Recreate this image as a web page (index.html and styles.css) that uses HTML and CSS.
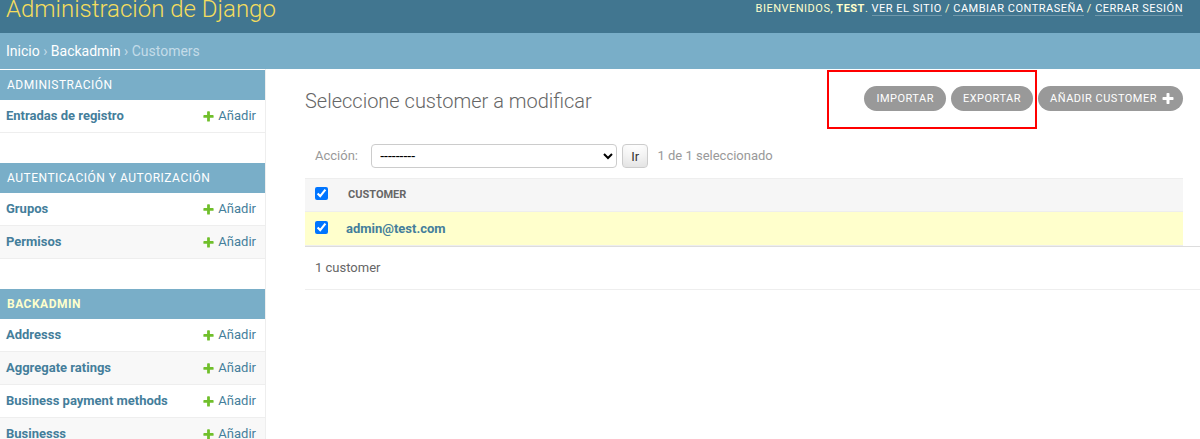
FILE: index.html
```html
<!DOCTYPE html>
<html lang="es">
<head>
<meta charset="utf-8">
<title>Seleccione customer a modificar</title>
<link rel="stylesheet" href="styles.css">
</head>
<body>
<header class="header">
  <h1 class="site-name">Administración de Django</h1>
  <div class="user-tools">Bienvenidos, <strong>test</strong>. <a href="#">Ver el sitio</a> / <a href="#">Cambiar contraseña</a> / <a href="#">Cerrar sesión</a></div>
</header>
<div class="breadcrumbs"><a href="#">Inicio</a> › <a href="#">Backadmin</a> › Customers</div>
<div class="main">
  <nav class="sidebar">
    <div class="module">
      <div class="caption">Administración</div>
      <div class="row"><a class="model" href="#">Entradas de registro</a><a class="addlink" href="#"><svg width="13" height="13" viewBox="0 0 1792 1792"><path fill="#70bf2b" d="M1600 796v192q0 40-28 68t-68 28h-416v416q0 40-28 68t-68 28h-192q-40 0-68-28t-28-68v-416h-416q-40 0-68-28t-28-68v-192q0-40 28-68t68-28h416v-416q0-40 28-68t68-28h192q40 0 68 28t28 68v416h416q40 0 68 28t28 68z"/></svg>Añadir</a></div>
    </div>
    <div class="module">
      <div class="caption">Autenticación y autorización</div>
      <div class="row"><a class="model" href="#">Grupos</a><a class="addlink" href="#"><svg width="13" height="13" viewBox="0 0 1792 1792"><path fill="#70bf2b" d="M1600 796v192q0 40-28 68t-68 28h-416v416q0 40-28 68t-68 28h-192q-40 0-68-28t-28-68v-416h-416q-40 0-68-28t-28-68v-192q0-40 28-68t68-28h416v-416q0-40 28-68t68-28h192q40 0 68 28t28 68v416h416q40 0 68 28t28 68z"/></svg>Añadir</a></div>
      <div class="row"><a class="model" href="#">Permisos</a><a class="addlink" href="#"><svg width="13" height="13" viewBox="0 0 1792 1792"><path fill="#70bf2b" d="M1600 796v192q0 40-28 68t-68 28h-416v416q0 40-28 68t-68 28h-192q-40 0-68-28t-28-68v-416h-416q-40 0-68-28t-28-68v-192q0-40 28-68t68-28h416v-416q0-40 28-68t68-28h192q40 0 68 28t28 68v416h416q40 0 68 28t28 68z"/></svg>Añadir</a></div>
    </div>
    <div class="module">
      <div class="caption caption-current">Backadmin</div>
      <div class="row"><a class="model" href="#">Addresss</a><a class="addlink" href="#"><svg width="13" height="13" viewBox="0 0 1792 1792"><path fill="#70bf2b" d="M1600 796v192q0 40-28 68t-68 28h-416v416q0 40-28 68t-68 28h-192q-40 0-68-28t-28-68v-416h-416q-40 0-68-28t-28-68v-192q0-40 28-68t68-28h416v-416q0-40 28-68t68-28h192q40 0 68 28t28 68v416h416q40 0 68 28t28 68z"/></svg>Añadir</a></div>
      <div class="row"><a class="model" href="#">Aggregate ratings</a><a class="addlink" href="#"><svg width="13" height="13" viewBox="0 0 1792 1792"><path fill="#70bf2b" d="M1600 796v192q0 40-28 68t-68 28h-416v416q0 40-28 68t-68 28h-192q-40 0-68-28t-28-68v-416h-416q-40 0-68-28t-28-68v-192q0-40 28-68t68-28h416v-416q0-40 28-68t68-28h192q40 0 68 28t28 68v416h416q40 0 68 28t28 68z"/></svg>Añadir</a></div>
      <div class="row"><a class="model" href="#">Business payment methods</a><a class="addlink" href="#"><svg width="13" height="13" viewBox="0 0 1792 1792"><path fill="#70bf2b" d="M1600 796v192q0 40-28 68t-68 28h-416v416q0 40-28 68t-68 28h-192q-40 0-68-28t-28-68v-416h-416q-40 0-68-28t-28-68v-192q0-40 28-68t68-28h416v-416q0-40 28-68t68-28h192q40 0 68 28t28 68v416h416q40 0 68 28t28 68z"/></svg>Añadir</a></div>
      <div class="row"><a class="model" href="#">Businesss</a><a class="addlink" href="#"><svg width="13" height="13" viewBox="0 0 1792 1792"><path fill="#70bf2b" d="M1600 796v192q0 40-28 68t-68 28h-416v416q0 40-28 68t-68 28h-192q-40 0-68-28t-28-68v-416h-416q-40 0-68-28t-28-68v-192q0-40 28-68t68-28h416v-416q0-40 28-68t68-28h192q40 0 68 28t28 68v416h416q40 0 68 28t28 68z"/></svg>Añadir</a></div>
    </div>
  </nav>
  <div class="content">
    <div class="content-head">
      <h1 class="title">Seleccione customer a modificar</h1>
      <ul class="object-tools">
        <li><a class="tool" href="#">Importar</a></li>
        <li><a class="tool" href="#">Exportar</a></li>
        <li><a class="tool tool-add" href="#">Añadir customer<svg width="14" height="14" viewBox="0 0 1792 1792"><path fill="#fff" d="M1600 736v192q0 40-28 68t-68 28h-416v416q0 40-28 68t-68 28h-192q-40 0-68-28t-28-68v-416h-416q-40 0-68-28t-28-68v-192q0-40 28-68t68-28h416v-416q0-40 28-68t68-28h192q40 0 68 28t28 68v416h416q40 0 68 28t28 68z"/></svg></a></li>
      </ul>
    </div>
    <div class="actions">
      <label>Acción: <select class="action-select"><option>---------</option><option>Eliminar customers seleccionado/s</option></select></label><button class="go" type="button">Ir</button> <span class="counter">1 de 1 seleccionado</span>
    </div>
    <table class="results">
      <thead>
        <tr><th class="check-col"><input type="checkbox" checked></th><th class="col-head">Customer</th></tr>
      </thead>
      <tbody>
        <tr class="selected"><td class="check-col"><input type="checkbox" checked></td><th class="cell-link"><a href="#">admin@test.com</a></th></tr>
      </tbody>
    </table>
    <p class="paginator">1 customer</p>
  </div>
</div>
<div class="annotation"></div>
</body>
</html>
```
FILE: styles.css
```css
* { box-sizing: border-box; }
html, body { margin: 0; padding: 0; }
body {
  font-family: Roboto, "Lucida Grande", "DejaVu Sans", sans-serif;
  font-size: 14px;
  color: #333;
  background: #fff;
  width: 1200px;
  height: 439px;
  overflow: hidden;
  position: relative;
}
a { color: #447e9b; text-decoration: none; }

.header {
  background: #417690;
  height: 33px;
  display: flex;
  justify-content: space-between;
  align-items: flex-start;
  padding: 0 17px 0 6px;
  overflow: hidden;
}
.site-name {
  margin: -3px 0 0;
  font-size: 24px;
  line-height: 24px;
  font-weight: 300;
  color: #f5dd5d;
}
.user-tools {
  margin-top: 3px;
  font-size: 11px;
  line-height: 12px;
  letter-spacing: 0.5px;
  text-transform: uppercase;
  color: #ffc;
}
.user-tools strong { font-weight: 700; }
.user-tools a { color: #fff; border-bottom: 1px solid rgba(255,255,255,0.25); }

.breadcrumbs {
  background: #79aec8;
  height: 36px;
  line-height: 36px;
  padding: 0 6px;
  font-size: 14px;
  color: #c4dce8;
}
.breadcrumbs a { color: #fff; }

.main { display: flex; min-height: 370px; }

.sidebar {
  flex: 0 0 266px;
  border-right: 1px solid #eee;
  padding-top: 1px;
}
.module { margin-bottom: 30px; }
.module:last-child { margin-bottom: 0; }
.caption {
  background: #79aec8;
  color: #fff;
  font-size: 12px;
  line-height: 14px;
  padding: 8px 7px;
  letter-spacing: 0.5px;
  text-transform: uppercase;
}
.caption-current { font-weight: 700; color: #ffc; }
.row {
  display: flex;
  justify-content: space-between;
  align-items: center;
  padding: 8px 9px 8px 6px;
  line-height: 16px;
  font-size: 13px;
  border-bottom: 1px solid #eee;
}
.row:nth-child(odd) { background: #f8f8f8; }
.model { font-weight: 700; }
.addlink { display: flex; align-items: center; }
.addlink svg { margin-right: 3px; }

.content {
  flex: 1;
  min-width: 0;
  padding: 17px 17px 0 39px;
}
.content-head {
  display: flex;
  justify-content: space-between;
  align-items: flex-start;
  height: 27px;
}
.title {
  margin: 3px 0 0;
  font-size: 20px;
  line-height: 24px;
  font-weight: 300;
  color: #666;
}
.object-tools {
  list-style: none;
  margin: 0;
  padding: 0;
  display: flex;
  gap: 5px;
}
.tool {
  display: block;
  background: #999;
  color: #fff;
  font-size: 11px;
  line-height: 19px;
  padding: 3px 12px;
  letter-spacing: 0.5px;
  text-transform: uppercase;
  border-radius: 15px;
}
.tool-add {
  display: flex;
  align-items: center;
  gap: 4px;
  padding-right: 8px;
}

.actions {
  margin-top: 21px;
  padding: 10px;
  line-height: 24px;
  color: #999;
  font-size: 13px;
}
.action-select {
  vertical-align: top;
  width: 246px;
  height: 24px;
  margin: 0 0 0 10px;
  padding: 0 0 0 4px;
  border: 1px solid #ccc;
  border-radius: 4px;
  background: #fff;
  color: #000;
  font-family: Roboto, sans-serif;
  font-size: 14px;
}
.go {
  vertical-align: top;
  margin: 0 0 0 5px;
  height: 24px;
  padding: 4px 8px;
  font-family: Roboto, sans-serif;
  font-size: 13px;
  line-height: 1;
  color: #333;
  background: #fff;
  border: 1px solid #ccc;
  border-radius: 4px;
  box-shadow: 0 -15px 20px -10px rgba(0,0,0,0.15) inset;
}
.counter { margin: 0 0 0 6px; }

.results {
  width: 100%;
  border-collapse: separate;
  border-spacing: 0;
}
.results th, .results td {
  text-align: left;
  padding: 8px 10px;
  line-height: 16px;
  vertical-align: top;
}
.results thead th {
  background: #f6f6f6;
  border-top: 1px solid #eee;
  border-bottom: 1px solid #eee;
  font-size: 11px;
  font-weight: 700;
  text-transform: uppercase;
  color: #666;
}
.results tbody td, .results tbody th {
  background: #ffc;
  border-bottom: 1px solid #eee;
  padding-top: 9px;
}
.check-col { width: 33px; }
.check-col input { display: block; margin: 0; width: 13px; height: 13px; }
.results tbody .cell-link { font-size: 13px; font-weight: 700; padding-left: 8px; }

.paginator {
  margin: 0 -17px 0 0;
  padding: 10px;
  line-height: 22px;
  font-size: 13px;
  color: #666;
  border-top: 1px solid #ddd;
  border-bottom: 1px solid #eee;
}

.annotation {
  position: absolute;
  left: 827px;
  top: 70px;
  width: 210px;
  height: 59px;
  border: 2px solid #f00;
  pointer-events: none;
}
```
